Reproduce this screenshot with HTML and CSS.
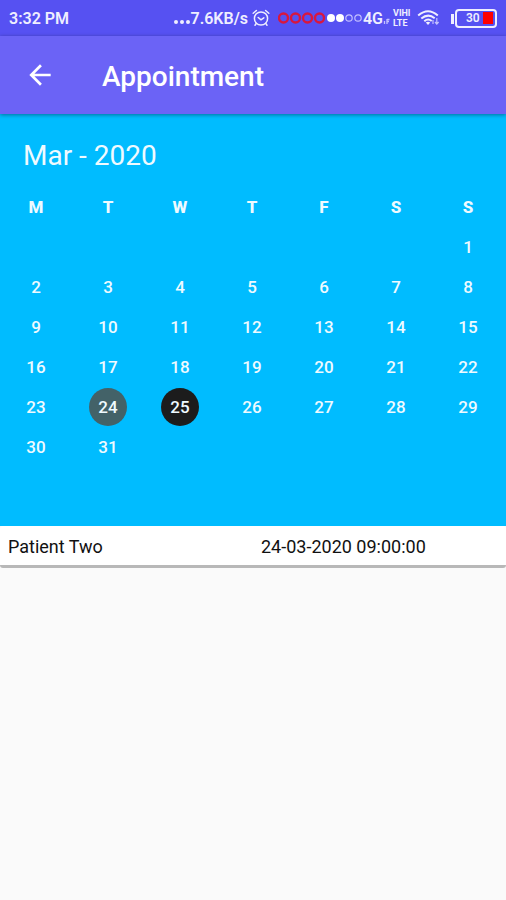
FILE: index.html
```html
<!DOCTYPE html>
<html lang="en">
<head>
<meta charset="utf-8">
<meta name="viewport" content="width=device-width, initial-scale=1">
<title>Appointment</title>
<link rel="stylesheet" href="styles.css">
</head>
<body>
<div class="status">
  <span class="clock">3:32 PM</span>
  <div class="status-icons">
    <svg class="dots" width="18" height="18" viewBox="0 0 18 18" fill="currentColor"><circle cx="3" cy="13" r="2"/><circle cx="9" cy="13" r="2"/><circle cx="15" cy="13" r="2"/></svg>
    <span class="speed">7.6KB/s</span>
    <svg class="alarm" width="18" height="18" viewBox="0 0 18 18" fill="none" stroke="currentColor" stroke-width="1.5" stroke-linecap="round"><circle cx="9" cy="9.5" r="6.6"/><path d="M1.2 4.2 4.4 1.5M16.8 4.2 13.6 1.5M4.3 14.4 3 16.2M13.7 14.4 15 16.2M6.2 8.5 9 10.8l2.8-2"/></svg>
    <svg class="signal" width="84" height="18" viewBox="0 0 84 18" fill="none">
      <g stroke="#d8173f" stroke-width="2.4"><circle cx="5.5" cy="9" r="4.5"/><circle cx="17.5" cy="9" r="4.5"/><circle cx="29.5" cy="9" r="4.5"/><circle cx="41.5" cy="9" r="4.5"/></g>
      <g fill="#fff"><circle cx="53" cy="9" r="4"/><circle cx="62" cy="9" r="4"/></g>
      <g stroke="#c3c0ff" stroke-width="1.2"><circle cx="71" cy="9" r="3.2"/><circle cx="80" cy="9" r="3.2"/></g>
    </svg>
    <span class="network">4G</span>
    <svg class="activity" width="7" height="18" viewBox="0 0 7 18" fill="none" stroke="#c3c0ff" stroke-width="1.3"><path d="M1.5 15v-3M4 15v-5M4 10.5h2.5M4 12.5h2"/></svg>
    <span class="volte"><span>VIHI</span><span>LTE</span></span>
    <svg class="wifi" width="24" height="18" viewBox="0 0 24 18" fill="none" stroke="currentColor" stroke-width="2"><path d="M1.2 6.5Q11 -2 20.8 6.5M4.3 9.6Q11 3.8 17.7 9.2M7.3 12.3Q11 9 14.7 12"/><path d="M8.8 13.5Q11 11.8 13.2 13.5L11 16Z" fill="currentColor" stroke="none"/><path d="M16 15v-4M19.8 9v5.5M18 13l1.8 2 1.8-2" stroke="#c3c0ff" stroke-width="1.2"/></svg>
    <span class="battery"><span class="level">30</span><span class="charge"></span></span>
  </div>
</div>
<header class="appbar">
  <button class="back" type="button" aria-label="Back"><svg width="32" height="32" viewBox="0 0 24 24" fill="currentColor"><path d="M20 11H7.83l5.59-5.59L12 4l-8 8 8 8 1.41-1.41L7.83 13H20v-2z"/></svg></button>
  <h1>Appointment</h1>
</header>
<main>
  <section class="calendar">
    <h2>Mar - 2020</h2>
    <table>
      <thead><tr><th>M</th><th>T</th><th>W</th><th>T</th><th>F</th><th>S</th><th>S</th></tr></thead>
      <tbody>
        <tr><td></td><td></td><td></td><td></td><td></td><td></td><td>1</td></tr>
        <tr><td>2</td><td>3</td><td>4</td><td>5</td><td>6</td><td>7</td><td>8</td></tr>
        <tr><td>9</td><td>10</td><td>11</td><td>12</td><td>13</td><td>14</td><td>15</td></tr>
        <tr><td>16</td><td>17</td><td>18</td><td>19</td><td>20</td><td>21</td><td>22</td></tr>
        <tr><td>23</td><td><span class="day marked">24</span></td><td><span class="day today">25</span></td><td>26</td><td>27</td><td>28</td><td>29</td></tr>
        <tr><td>30</td><td>31</td><td></td><td></td><td></td><td></td><td></td></tr>
      </tbody>
    </table>
  </section>
  <div class="entry"><span>Patient Two</span><span>24-03-2020 09:00:00</span></div>
</main>
</body>
</html>
```

FILE: styles.css
```css
* { box-sizing: border-box; }
body {
  margin: 0;
  background: #fafafa;
  color: #111;
  font-family: Roboto, "Liberation Sans", sans-serif;
}
svg { display: block; flex: none; }
.status {
  display: flex;
  justify-content: space-between;
  align-items: center;
  height: 36px;
  padding: 0 9px;
  background: #5651f2;
  color: #efeeff;
  font-size: 16px;
  font-weight: 600;
  white-space: nowrap;
}
.status-icons { display: flex; align-items: center; }
.alarm { margin: 0 8px 0 4px; }
.network { margin-left: 1px; }
.volte {
  display: flex;
  flex-direction: column;
  width: 18px;
  margin: 0 6px 0 3px;
  font-size: 9px;
  font-weight: 700;
  line-height: 10px;
}
.wifi { margin-right: 10px; }
.battery {
  position: relative;
  display: flex;
  align-items: center;
  justify-content: space-between;
  width: 42px;
  height: 19px;
  margin-left: 4px;
  padding: 2px;
  border: 2px solid #efeeff;
  border-radius: 4px;
}
.battery::before {
  content: "";
  position: absolute;
  left: -6px;
  top: 3px;
  width: 3px;
  height: 10px;
  background: #efeeff;
}
.level { padding-left: 7px; font-size: 12px; }
.charge { width: 10px; height: 12px; background: #f00; }
.appbar {
  position: relative;
  display: flex;
  align-items: center;
  gap: 46px;
  height: 78px;
  padding: 0 24px;
  background: #6b63f6;
  color: #fff;
  box-shadow: 0 1px 4px rgba(0, 0, 0, .4);
}
.back { padding: 0; border: 0; background: none; color: inherit; }
h1 { margin: 4px 0 0; font-size: 28px; font-weight: 500; line-height: 32px; }
.calendar {
  min-height: 412px;
  padding: 25px 2px 24px 0;
  background: #00bcff;
  color: #effaff;
}
h2 { margin: 0 23px 14px; font-size: 28px; font-weight: 400; line-height: 34px; }
table { width: 100%; table-layout: fixed; border-collapse: collapse; }
th, td { height: 40px; padding: 0; text-align: center; font-size: 17px; font-weight: 500; }
th { font-weight: 800; }
.day {
  display: flex;
  align-items: center;
  justify-content: center;
  width: 38px;
  height: 38px;
  margin: auto;
  border-radius: 50%;
}
.marked { background: #436268; }
.today { background: #1c1c1c; }
.entry {
  display: grid;
  grid-template-columns: 1fr 1fr;
  column-gap: 8px;
  align-items: center;
  height: 42px;
  padding: 2px 0 0 8px;
  border-bottom: 3px solid #b8b8b8;
  border-radius: 3px;
  background: #fff;
  font-size: 18px;
}
```
